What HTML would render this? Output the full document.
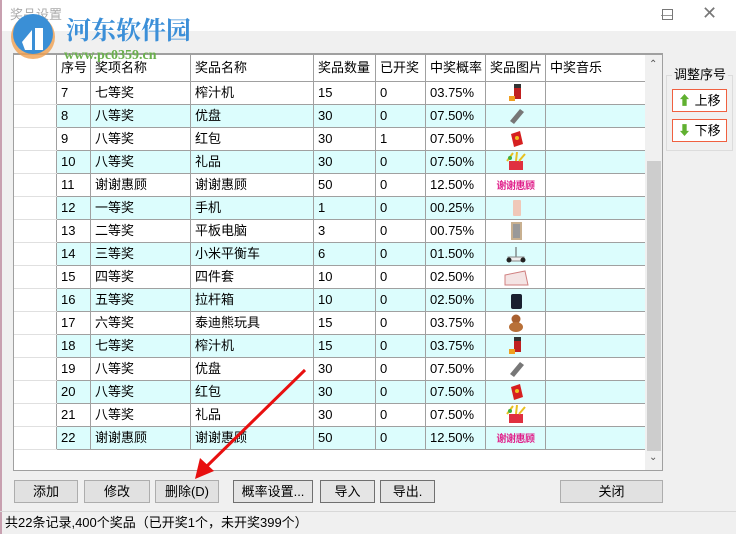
<!DOCTYPE html>
<html><head><meta charset="utf-8"><style>
*{margin:0;padding:0;box-sizing:border-box}
body{width:736px;height:534px;overflow:hidden;background:#f0f0f0;font-family:"Liberation Sans","Noto Sans CJK SC",sans-serif;font-size:13px;color:#000;position:relative}
.abs{position:absolute}
#title{left:0;top:0;width:736px;height:31px;background:#fff}
#grid{left:13px;top:53px;width:650px;height:418px;border:1px solid #a0a0a0;border-top:2px solid #a0a0a0;background:#fff;overflow:hidden}
table{border-collapse:collapse;table-layout:fixed;position:absolute;left:0;top:0}
td{border:1px solid #a0a0a0;padding:0;white-space:nowrap;overflow:hidden;font-size:13px}
td>div{height:22px;line-height:22px;overflow:hidden;padding-left:4px}
tr.h td>div{height:26px;line-height:26px}
tr.h td{background:#fff;border-top:none}
tr.c td{background:#dcfdfd}
td.rh{background:#fff!important;border-color:#e0e0e0 #a0a0a0 #e0e0e0 #fff}
td.im>div{text-align:center;padding:0}
td.im svg{display:block;margin:1px auto 0}
.btn{position:absolute;top:480px;height:23px;background:#e1e1e1;border:1px solid #adadad;text-align:center;line-height:21px;font-size:13px}
.btn.d{border:1px solid #707070;background:#e5e5e5}
.xx{color:#e0208a;font-weight:bold;font-size:10px;letter-spacing:-0.5px}
.top{z-index:5}
</style></head><body>
<div id="title" class="abs"></div>
<div class="abs" style="left:0;top:0;width:2px;height:534px;background:#c8a0b0"></div>
<div class="abs" style="left:10px;top:7px;font-size:13px;color:#aaa;line-height:16px">奖品设置</div>

<div id="grid" class="abs">
<table>
<colgroup><col style="width:42px"><col style="width:34px"><col style="width:100px"><col style="width:123px"><col style="width:62px"><col style="width:50px"><col style="width:60px"><col style="width:60px"><col style="width:100px"></colgroup>
<tr class="h"><td class="rh" style="border-top:none"><div></div></td><td><div>序号</div></td><td><div>奖项名称</div></td><td><div>奖品名称</div></td><td><div>奖品数量</div></td><td><div>已开奖</div></td><td><div>中奖概率</div></td><td><div>奖品图片</div></td><td><div>中奖音乐</div></td></tr>
<tr><td class="rh"><div></div></td><td><div>7</div></td><td><div>七等奖</div></td><td><div>榨汁机</div></td><td><div>15</div></td><td><div>0</div></td><td><div>03.75%</div></td><td class="im"><div><svg width="22" height="20"><rect x="9" y="1" width="7" height="15" fill="#c02020"/><rect x="9" y="1" width="7" height="4" fill="#333"/><rect x="4" y="13" width="6" height="5" fill="#f0a020"/></svg></div></td><td><div></div></td></tr>
<tr class="c"><td class="rh"><div></div></td><td><div>8</div></td><td><div>八等奖</div></td><td><div>优盘</div></td><td><div>30</div></td><td><div>0</div></td><td><div>07.50%</div></td><td class="im"><div><svg width="22" height="20"><path d="M5 15 L15 3 L19 6 L9 18Z" fill="#777"/></svg></div></td><td><div></div></td></tr>
<tr><td class="rh"><div></div></td><td><div>9</div></td><td><div>八等奖</div></td><td><div>红包</div></td><td><div>30</div></td><td><div>1</div></td><td><div>07.50%</div></td><td class="im"><div><svg width="22" height="20"><path d="M6 5 L15 2 L18 15 L9 18Z" fill="#d62020"/><circle cx="12" cy="9" r="2" fill="#f0c020"/></svg></div></td><td><div></div></td></tr>
<tr class="c"><td class="rh"><div></div></td><td><div>10</div></td><td><div>八等奖</div></td><td><div>礼品</div></td><td><div>30</div></td><td><div>0</div></td><td><div>07.50%</div></td><td class="im"><div><svg width="24" height="20"><rect x="5" y="9" width="14" height="9" fill="#e03040"/><path d="M3 9 L9 1 M12 9 L13 0 M15 9 L21 2" stroke="#e8c020" stroke-width="2"/><circle cx="6" cy="6" r="2" fill="#40b040"/></svg></div></td><td><div></div></td></tr>
<tr><td class="rh"><div></div></td><td><div>11</div></td><td><div>谢谢惠顾</div></td><td><div>谢谢惠顾</div></td><td><div>50</div></td><td><div>0</div></td><td><div>12.50%</div></td><td class="im"><div><span class="xx">谢谢惠顾</span></div></td><td><div></div></td></tr>
<tr class="c"><td class="rh"><div></div></td><td><div>12</div></td><td><div>一等奖</div></td><td><div>手机</div></td><td><div>1</div></td><td><div>0</div></td><td><div>00.25%</div></td><td class="im"><div><svg width="22" height="20"><rect x="8" y="2" width="8" height="16" rx="1" fill="#f0c8b8"/></svg></div></td><td><div></div></td></tr>
<tr><td class="rh"><div></div></td><td><div>13</div></td><td><div>二等奖</div></td><td><div>平板电脑</div></td><td><div>3</div></td><td><div>0</div></td><td><div>00.75%</div></td><td class="im"><div><svg width="22" height="20"><rect x="6" y="1" width="11" height="18" fill="#c8b090"/><rect x="8" y="3" width="7" height="14" fill="#999"/></svg></div></td><td><div></div></td></tr>
<tr class="c"><td class="rh"><div></div></td><td><div>14</div></td><td><div>三等奖</div></td><td><div>小米平衡车</div></td><td><div>6</div></td><td><div>0</div></td><td><div>01.50%</div></td><td class="im"><div><svg width="24" height="20"><path d="M12 3 V13" stroke="#555"/><rect x="4" y="13" width="16" height="4" fill="#eee" stroke="#888"/><circle cx="5" cy="16" r="2.5" fill="#222"/><circle cx="19" cy="16" r="2.5" fill="#222"/></svg></div></td><td><div></div></td></tr>
<tr><td class="rh"><div></div></td><td><div>15</div></td><td><div>四等奖</div></td><td><div>四件套</div></td><td><div>10</div></td><td><div>0</div></td><td><div>02.50%</div></td><td class="im"><div><svg width="28" height="20"><path d="M3 8 L23 4 L26 18 L3 18Z" fill="#f4e4e4" stroke="#d08080"/></svg></div></td><td><div></div></td></tr>
<tr class="c"><td class="rh"><div></div></td><td><div>16</div></td><td><div>五等奖</div></td><td><div>拉杆箱</div></td><td><div>10</div></td><td><div>0</div></td><td><div>02.50%</div></td><td class="im"><div><svg width="22" height="20"><rect x="6" y="4" width="11" height="15" rx="2" fill="#1a2030"/></svg></div></td><td><div></div></td></tr>
<tr><td class="rh"><div></div></td><td><div>17</div></td><td><div>六等奖</div></td><td><div>泰迪熊玩具</div></td><td><div>15</div></td><td><div>0</div></td><td><div>03.75%</div></td><td class="im"><div><svg width="22" height="20"><circle cx="11" cy="6" r="4.5" fill="#a86030"/><ellipse cx="11" cy="14" rx="7" ry="5" fill="#b87038"/></svg></div></td><td><div></div></td></tr>
<tr class="c"><td class="rh"><div></div></td><td><div>18</div></td><td><div>七等奖</div></td><td><div>榨汁机</div></td><td><div>15</div></td><td><div>0</div></td><td><div>03.75%</div></td><td class="im"><div><svg width="22" height="20"><rect x="9" y="1" width="7" height="15" fill="#c02020"/><rect x="9" y="1" width="7" height="4" fill="#333"/><rect x="4" y="13" width="6" height="5" fill="#f0a020"/></svg></div></td><td><div></div></td></tr>
<tr><td class="rh"><div></div></td><td><div>19</div></td><td><div>八等奖</div></td><td><div>优盘</div></td><td><div>30</div></td><td><div>0</div></td><td><div>07.50%</div></td><td class="im"><div><svg width="22" height="20"><path d="M5 15 L15 3 L19 6 L9 18Z" fill="#777"/></svg></div></td><td><div></div></td></tr>
<tr class="c"><td class="rh"><div></div></td><td><div>20</div></td><td><div>八等奖</div></td><td><div>红包</div></td><td><div>30</div></td><td><div>0</div></td><td><div>07.50%</div></td><td class="im"><div><svg width="22" height="20"><path d="M6 5 L15 2 L18 15 L9 18Z" fill="#d62020"/><circle cx="12" cy="9" r="2" fill="#f0c020"/></svg></div></td><td><div></div></td></tr>
<tr><td class="rh"><div></div></td><td><div>21</div></td><td><div>八等奖</div></td><td><div>礼品</div></td><td><div>30</div></td><td><div>0</div></td><td><div>07.50%</div></td><td class="im"><div><svg width="24" height="20"><rect x="5" y="9" width="14" height="9" fill="#e03040"/><path d="M3 9 L9 1 M12 9 L13 0 M15 9 L21 2" stroke="#e8c020" stroke-width="2"/><circle cx="6" cy="6" r="2" fill="#40b040"/></svg></div></td><td><div></div></td></tr>
<tr class="c"><td class="rh"><div></div></td><td><div>22</div></td><td><div>谢谢惠顾</div></td><td><div>谢谢惠顾</div></td><td><div>50</div></td><td><div>0</div></td><td><div>12.50%</div></td><td class="im"><div><span class="xx">谢谢惠顾</span></div></td><td><div></div></td></tr>
</table>
<div class="abs" style="left:631px;top:0;width:17px;height:416px;background:#f0f0f0"></div>
<div class="abs" style="left:633px;top:106px;width:14px;height:290px;background:#cdcdcd"></div>
<div class="abs" style="left:635px;top:4px;font-size:10px;color:#555">⌃</div>
<div class="abs" style="left:635px;top:397px;font-size:10px;color:#555">⌄</div>
</div>

<svg class="abs top" style="left:8px;top:12px" width="50" height="50"><circle cx="25" cy="25" r="22" fill="#f0a050" opacity=".8"/><circle cx="25" cy="22" r="20" fill="#3a8fd6"/><path d="M14 30 L24 18 L24 38 L17 38 Z M27 16 L35 16 L35 38 L27 38Z" fill="#fff"/></svg>
<div class="abs top" style="left:66px;top:12px;font-size:25px;font-weight:bold;color:#3b8fd8;font-family:'Noto Serif CJK SC',serif;line-height:34px">河东软件园</div>
<div class="abs top" style="left:64px;top:48px;font-size:14px;font-weight:bold;color:#6ab04c;font-family:'Liberation Serif',serif;line-height:16px">www.pc0359.cn</div>
<div class="abs" style="left:661px;top:15px;width:11px;height:1px;background:#999"></div>
<div class="abs" style="left:662px;top:9px;width:11px;height:11px;border:1px solid #777"></div>
<div class="abs" style="left:702px;top:3px;font-size:18px;color:#777">✕</div>

<div class="abs" style="left:666px;top:75px;width:67px;height:76px;border:1px solid #dcdcdc"></div>
<div class="abs" style="left:672px;top:66px;background:#f0f0f0;padding:0 2px;font-size:13px;line-height:18px">调整序号</div>
<div class="abs" style="left:672px;top:89px;width:55px;height:23px;border:1px solid #f06040;background:#fff;line-height:21px;padding-left:5px"><span style="color:#60b030">⬆</span> 上移</div>
<div class="abs" style="left:672px;top:119px;width:55px;height:23px;border:1px solid #f06040;background:#fff;line-height:21px;padding-left:5px"><span style="color:#60b030">⬇</span> 下移</div>

<div class="btn" style="left:14px;width:64px">添加</div>
<div class="btn" style="left:84px;width:66px">修改</div>
<div class="btn" style="left:155px;width:64px">删除(D)</div>
<div class="btn d" style="left:233px;width:80px">概率设置...</div>
<div class="btn d" style="left:320px;width:55px">导入</div>
<div class="btn d" style="left:380px;width:55px">导出.</div>
<div class="btn" style="left:560px;width:103px">关闭</div>

<div class="abs" style="left:0;top:511px;width:736px;height:1px;background:#d8d8d8"></div>
<div class="abs" style="left:5px;top:514px;font-size:13px;line-height:18px">共22条记录,400个奖品（已开奖1个，未开奖399个）</div>

<svg class="abs top" style="left:0;top:0" width="736" height="534"><path d="M305 370 L205 468" stroke="#e81010" stroke-width="3"/><path d="M195 479 L200 458 L214 471Z" fill="#e81010"/></svg>
</body></html>
